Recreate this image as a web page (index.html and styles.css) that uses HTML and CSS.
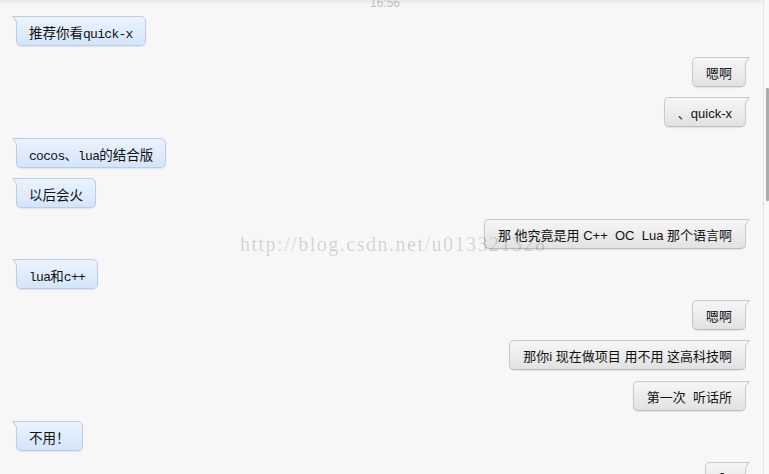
FILE: index.html
```html
<!DOCTYPE html>
<html lang="zh-CN">
<head>
<meta charset="utf-8">
<title>聊天记录</title>
<link rel="stylesheet" href="styles.css">
</head>
<body>
<div class="window">
  <main class="chat">
    <div class="time">16:56</div>
    <div class="bubble in">推荐你看<span class="lat">quick-x</span></div>
    <div class="bubble out">嗯啊</div>
    <div class="bubble out">、quick-x</div>
    <div class="bubble in"><span class="lat">cocos</span>、<span class="lat">lua</span>的结合版</div>
    <div class="bubble in">以后会火</div>
    <div class="bubble out">那 他究竟是用 C++  OC  Lua 那个语言啊</div>
    <div class="bubble in"><span class="lat">lua</span>和<span class="lat">c++</span></div>
    <div class="bubble out">嗯啊</div>
    <div class="bubble out">那你i 现在做项目 用不用 这高科技啊</div>
    <div class="bubble out">第一次  听话所</div>
    <div class="bubble in">不用！</div>
    <div class="bubble out">？</div>
    <div class="watermark">http://blog.csdn.net/u013321328</div>
  </main>
  <aside class="scroll"><div class="thumb"></div></aside>
</div>
</body>
</html>
```
FILE: styles.css
```css
html, body {
  margin: 0;
  padding: 0;
  height: 474px;
  overflow: hidden;
  background: #f7f7f7;
}

.window {
  display: flex;
  height: 474px;
}

.chat {
  position: relative;
  flex: 1;
  display: flex;
  flex-direction: column;
  gap: 10.5px;
  padding: 0 17px 0 16px;
  background: linear-gradient(to bottom, #e9e9e9 0, #f7f7f7 5px);
  overflow: hidden;
}

.time {
  align-self: center;
  margin-left: 8px;
  height: 12px;
  line-height: 12px;
  margin-top: -4px;
  margin-bottom: -2.5px;
  font: 12px "Liberation Sans", Arial, sans-serif;
  color: #bdbdbd;
}

.bubble {
  position: relative;
  flex: none;
  box-sizing: content-box;
  line-height: 18px;
  border-radius: 5px;
  white-space: pre;
  color: #111;
  box-shadow: 0 1px 1px rgba(0, 0, 0, 0.08);
}

.bubble.in {
  align-self: flex-start;
  height: 18px;
  padding: 5px 12px;
  border: 1px solid #b9cde8;
  border-top-left-radius: 0;
  background: linear-gradient(to bottom, #ebf3fe, #d4e5fa);
  font: 13.5px "Noto Sans CJK SC", sans-serif;
}

.bubble.out {
  align-self: flex-end;
  height: 18px;
  padding: 5px 13px;
  border: 1px solid #c9c9c9;
  border-bottom-color: #bcbcbc;
  border-top-right-radius: 0;
  background: linear-gradient(to bottom, #f6f6f6, #e2e2e2);
  font: 13px "Liberation Sans", "Noto Sans CJK SC", sans-serif;
}

.lat {
  font-family: "Liberation Mono", monospace;
  font-size: 13px;
  letter-spacing: -0.7px;
}

.bubble.in::before,
.bubble.in::after,
.bubble.out::before,
.bubble.out::after {
  content: "";
  position: absolute;
  width: 0;
  height: 0;
}

.bubble.in::before {
  left: -5px;
  top: -1px;
  border-top: 7px solid #b9cde8;
  border-left: 5px solid transparent;
}

.bubble.in::after {
  left: -3px;
  top: 0;
  border-top: 5px solid #ebf3fe;
  border-left: 3px solid transparent;
}

.bubble.out::before {
  right: -5px;
  top: -1px;
  border-top: 7px solid #c9c9c9;
  border-right: 5px solid transparent;
}

.bubble.out::after {
  right: -3px;
  top: 0;
  border-top: 5px solid #f6f6f6;
  border-right: 3px solid transparent;
}

.watermark {
  position: absolute;
  left: 240px;
  top: 233px;
  font: 20px "Liberation Serif", serif;
  letter-spacing: 1.5px;
  color: rgba(0, 0, 0, 0.16);
  white-space: nowrap;
  pointer-events: none;
}

.scroll {
  width: 5px;
  border-left: 1px solid #e4e4e4;
  background: #f8f8f8;
}

.thumb {
  width: 3px;
  height: 113px;
  margin: 88px 0 0 2px;
  background: #ababab;
  border-radius: 1px;
}
```
